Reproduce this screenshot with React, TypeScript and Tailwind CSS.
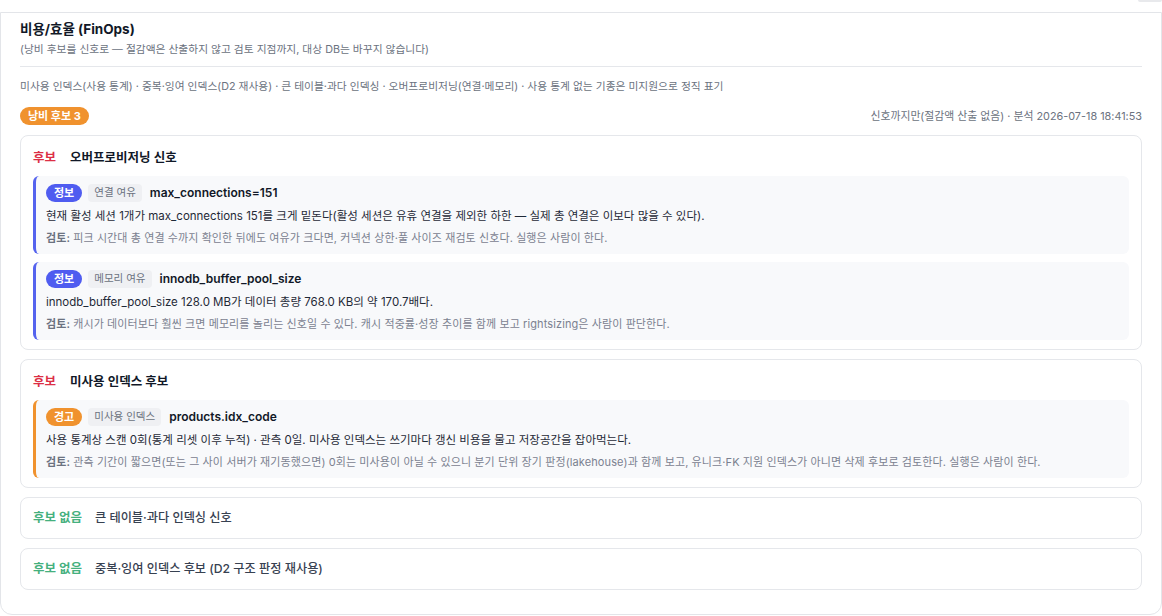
import type { ReactNode } from "react";

type Finding = {
  level: "info" | "warn";
  tag: string;
  target: string;
  body: string;
  review: string;
};

type Check = {
  title: string;
  findings: Finding[];
};

const CHECKS: Check[] = [
  {
    title: "오버프로비저닝 신호",
    findings: [
      {
        level: "info",
        tag: "연결 여유",
        target: "max_connections=151",
        body: "현재 활성 세션 1개가 max_connections 151를 크게 밑돈다(활성 세션은 유휴 연결을 제외한 하한 — 실제 총 연결은 이보다 많을 수 있다).",
        review: "피크 시간대 총 연결 수까지 확인한 뒤에도 여유가 크다면, 커넥션 상한·풀 사이즈 재검토 신호다. 실행은 사람이 한다.",
      },
      {
        level: "info",
        tag: "메모리 여유",
        target: "innodb_buffer_pool_size",
        body: "innodb_buffer_pool_size 128.0 MB가 데이터 총량 768.0 KB의 약 170.7배다.",
        review: "캐시가 데이터보다 훨씬 크면 메모리를 놀리는 신호일 수 있다. 캐시 적중률·성장 추이를 함께 보고 rightsizing은 사람이 판단한다.",
      },
    ],
  },
  {
    title: "미사용 인덱스 후보",
    findings: [
      {
        level: "warn",
        tag: "미사용 인덱스",
        target: "products.idx_code",
        body: "사용 통계상 스캔 0회(통계 리셋 이후 누적) · 관측 0일. 미사용 인덱스는 쓰기마다 갱신 비용을 물고 저장공간을 잡아먹는다.",
        review: "관측 기간이 짧으면(또는 그 사이 서버가 재기동했으면) 0회는 미사용이 아닐 수 있으니 분기 단위 장기 판정(lakehouse)과 함께 보고, 유니크·FK 지원 인덱스가 아니면 삭제 후보로 검토한다. 실행은 사람이 한다.",
      },
    ],
  },
];

const CLEAN = ["큰 테이블·과다 인덱싱 신호", "중복·잉여 인덱스 후보 (D2 구조 판정 재사용)"];

function FindingRow({ f }: { f: Finding }) {
  const warn = f.level === "warn";
  return (
    <div
      className={`rounded-md border-l-[3px] bg-[#f8f9fb] px-[10px] pt-[8px] pb-[8px] ${
        warn ? "border-[#f0922e]" : "border-[#5563ee]"
      }`}
    >
      <div className="flex h-[18px] items-center gap-[6px]">
        <span
          className={`rounded-full px-[8px] text-[11px] font-bold leading-[18px] text-white ${
            warn ? "bg-[#f0922e]" : "bg-[#4f5cf0]"
          }`}
        >
          {warn ? "경고" : "정보"}
        </span>
        <span className="rounded bg-[#eff0f3] px-[6px] text-[10.5px] leading-[18px] text-[#6b7280]">{f.tag}</span>
        <span className="ml-[2px] text-[12px] font-semibold leading-[18px] text-[#111827]">{f.target}</span>
      </div>
      <div className="mt-[5px] h-[18px] text-[11.5px] leading-[18px] text-[#1f2937]">{f.body}</div>
      <div className="mt-[5px] h-[16px] text-[11px] leading-[16px] tracking-[0.1px] text-[#7b8190]">
        <b className="font-semibold text-[#6b7280]">검토:</b> {f.review}
      </div>
    </div>
  );
}

function Card({ children }: { children: ReactNode }) {
  return <div className="rounded-lg border border-[#e5e7eb] bg-white px-[12px]">{children}</div>;
}

export default function App() {
  return (
    <div
      className="h-[616px] w-[1162px] overflow-hidden bg-white text-[#111827]"
      style={{ fontFamily: 'Inter, "Noto Sans CJK KR", "Noto Sans", sans-serif' }}
    >
      <div className="flex h-[12px] justify-end">
        <div className="h-[2px] w-[24px] rounded-b bg-[#e8e9ec]" />
      </div>
      <section className="h-[603px] rounded-b-xl border border-[#e3e5e9] px-[19px]">
        <h2 className="mt-[7px] text-[13.5px] font-bold leading-[18px] text-[#111827]">비용/효율 (FinOps)</h2>
        <p className="mt-[4px] text-[10.75px] leading-[16px] text-[#6b7280]">
          (낭비 후보를 신호로 — 절감액은 산출하지 않고 검토 지점까지, 대상 DB는 바꾸지 않습니다)
        </p>
        <div className="mt-[8px] h-px bg-[#e5e7eb]" />
        <p className="mt-[12px] text-[10.75px] leading-[16px] text-[#6b7280]">
          미사용 인덱스(사용 통계) · 중복·잉여 인덱스(D2 재사용) · 큰 테이블·과다 인덱싱 · 오버프로비저닝(연결·메모리) · 사용 통계 없는 기종은 미지원으로 정직 표기
        </p>
        <div className="mt-[12px] flex items-center justify-between">
          <span className="rounded-full bg-[#f0922e] px-[8px] text-[11px] font-bold leading-[18px] text-white">낭비 후보 3</span>
          <span className="text-[10.85px] leading-[16px] text-[#6b7280]">신호까지만(절감액 산출 없음) · 분석 2026-07-18 18:41:53</span>
        </div>

        <div className="mt-[10px] flex flex-col gap-[9px]">
          {CHECKS.map((c) => (
            <Card key={c.title}>
              <div className="flex h-[40px] items-center gap-[14px] pt-[4px] text-[12.5px] leading-[18px]">
                <span className="font-bold text-[#dc2f45]">후보</span>
                <span className="font-semibold text-[#111827]">{c.title}</span>
              </div>
              <div className="flex flex-col gap-[8px] pb-[9px]">
                {c.findings.map((f) => (
                  <FindingRow key={f.target} f={f} />
                ))}
              </div>
            </Card>
          ))}
          {CLEAN.map((t) => (
            <Card key={t}>
              <div className="flex h-[40px] items-center gap-[13px] text-[12.5px] leading-[18px]">
                <span className="font-bold text-[#45b07e]">후보 없음</span>
                <span className="text-[12.2px] font-medium text-[#374151]">{t}</span>
              </div>
            </Card>
          ))}
        </div>
      </section>
    </div>
  );
}
